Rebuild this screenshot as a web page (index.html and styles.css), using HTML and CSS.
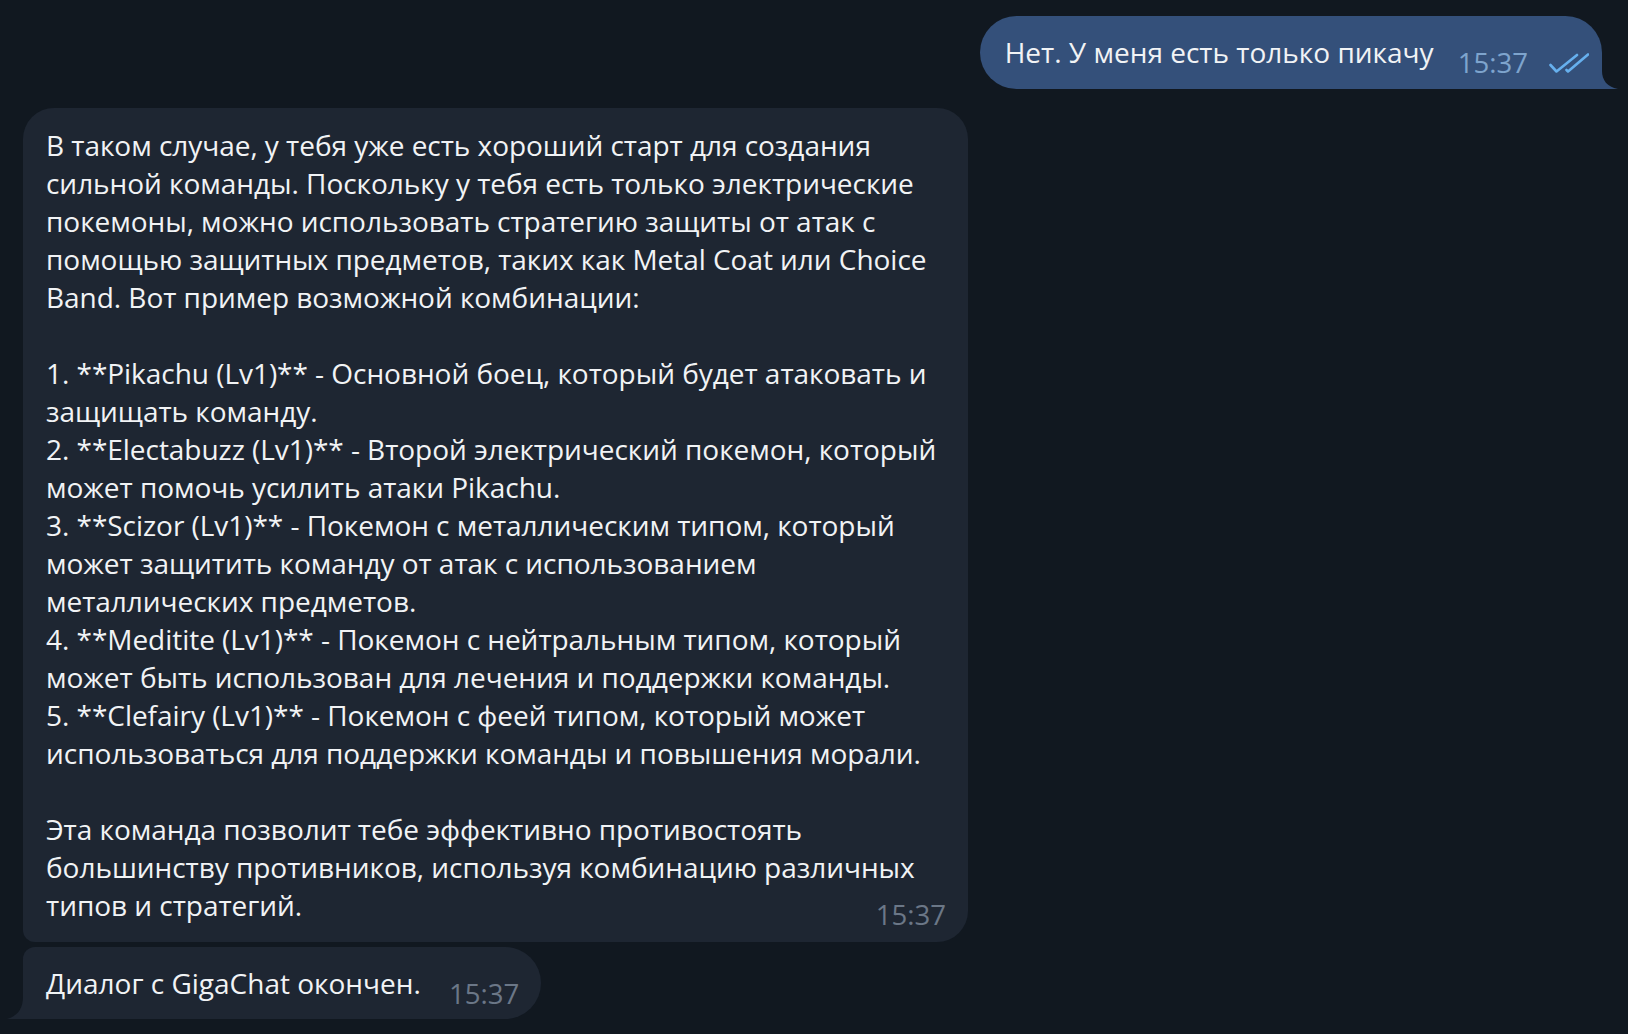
FILE: index.html
```html
<!DOCTYPE html>
<html lang="ru">
<head>
<meta charset="utf-8">
<title>Chat</title>
<link rel="stylesheet" href="styles.css">
</head>
<body>
<div class="chat">
  <div class="row row-out">
    <div class="bubble bubble-out">
      <div class="text text-out">Нет. У меня есть только пикачу</div>
      <span class="time time-out">15:37</span>
      <svg class="checks" width="40" height="22" viewBox="0 0 40 22"><path d="M1.5 13 L7.5 19.5 L28 3" fill="none" stroke="#66b0ee" stroke-width="2.6" stroke-linecap="round" stroke-linejoin="round"/><path d="M17.5 18 L19 19.5 L39 2.5" fill="none" stroke="#66b0ee" stroke-width="2.6" stroke-linecap="round" stroke-linejoin="round"/></svg>
      <svg class="tail tail-out" width="16" height="18" viewBox="0 0 16 18"><path d="M0 0 C0 9 5 16 16 18 L0 18 Z" fill="#34507a"/></svg>
    </div>
  </div>
  <div class="row row-in">
    <div class="bubble-long">
      <div class="text text-long">В таком случае, у тебя уже есть хороший старт для создания<br>сильной команды. Поскольку у тебя есть только электрические<br>покемоны, можно использовать стратегию защиты от атак с<br>помощью защитных предметов, таких как Metal Coat или Choice<br>Band. Вот пример возможной комбинации:<br><br>1. **Pikachu (Lv1)** - Основной боец, который будет атаковать и<br>защищать команду.<br>2. **Electabuzz (Lv1)** - Второй электрический покемон, который<br>может помочь усилить атаки Pikachu.<br>3. **Scizor (Lv1)** - Покемон с металлическим типом, который<br>может защитить команду от атак с использованием<br>металлических предметов.<br>4. **Meditite (Lv1)** - Покемон с нейтральным типом, который<br>может быть использован для лечения и поддержки команды.<br>5. **Clefairy (Lv1)** - Покемон с феей типом, который может<br>использоваться для поддержки команды и повышения морали.<br><br>Эта команда позволит тебе эффективно противостоять<br>большинству противников, используя комбинацию различных<br>типов и стратегий.</div>
      <span class="time time-in time-end">15:37</span>
    </div>
  </div>
  <div class="row row-in row-tight">
    <div class="bubble bubble-in bubble-short">
      <div class="text">Диалог с GigaChat окончен.</div>
      <span class="time time-in">15:37</span>
      <svg class="tail tail-in" width="16" height="22" viewBox="0 0 16 22"><path d="M16 0 C16 11 11 19 0 22 L16 22 Z" fill="#1e2632"/></svg>
    </div>
  </div>
</div>
</body>
</html>
```
FILE: styles.css
```css
html, body {
  margin: 0;
  padding: 0;
  background: #111820;
}
body {
  font-family: "Open Sans", "Noto Sans", sans-serif;
  color: #f1f3f5;
  width: 1628px;
  height: 1034px;
  overflow: hidden;
}
.chat {
  display: flex;
  flex-direction: column;
  padding-top: 16px;
}
.row {
  display: flex;
}
.row-out {
  justify-content: flex-end;
  padding-right: 26px;
}
.row-in {
  padding-left: 23px;
  margin-top: 19px;
}
.row-tight {
  margin-top: 5px;
}
.bubble {
  position: relative;
  display: flex;
  align-items: flex-end;
  box-sizing: border-box;
}
.text {
  font-size: 28px;
  line-height: 38px;
  white-space: nowrap;
}
.bubble-out {
  background: #34507a;
  height: 73px;
  padding: 17px 13px 0 25px;
  border-radius: 37px 37px 0 37px;
  align-items: flex-start;
}
.time {
  font-size: 27.6px;
  line-height: 1;
  position: relative;
  top: 6px;
}
.time-out {
  color: #7ea4cd;
  margin-left: 24px;
  top: 16px;
}
.checks {
  margin-left: 21px;
  margin-top: 19px;
}
.tail {
  position: absolute;
  bottom: 0;
}
.tail-out {
  right: -16px;
}
.tail-in {
  left: -16px;
}
.bubble-in {
  background: #1e2632;
}
.time-in {
  color: #6b7787;
}
.bubble-long {
  display: grid;
  box-sizing: border-box;
  width: 945px;
  padding: 18px 22px 18px 23px;
  border-radius: 31px 31px 31px 12px;
  background: #1e2632;
}
.text-long {
  grid-area: 1 / 1;
  letter-spacing: -0.04px;
}
.time-end {
  grid-area: 1 / 1;
  justify-self: end;
  align-self: end;
  top: 5px;
}
.bubble-short {
  padding: 17px 22px 17px 23px;
  border-radius: 12px 36px 36px 0;
}
.bubble-short .time-in {
  margin-left: 28px;
}
```
